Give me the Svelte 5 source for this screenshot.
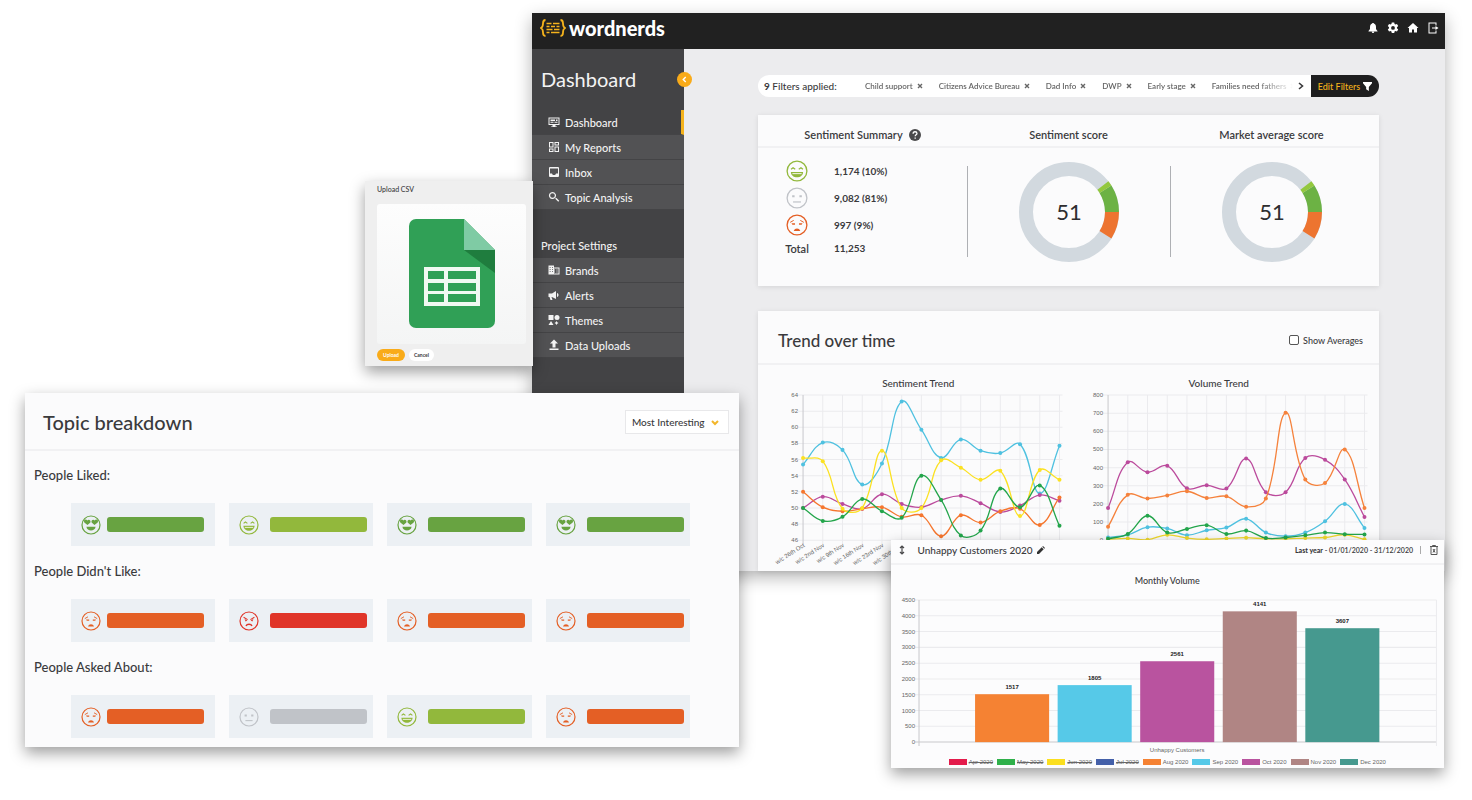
<script>
	const filters = ['Child support', 'Citizens Advice Bureau', 'Dad Info', 'DWP', 'Early stage', 'Families need fathers'];

	const mainNav = [
		{ label: 'Dashboard', icon: 'monitor', active: true },
		{ label: 'My Reports', icon: 'grid' },
		{ label: 'Inbox', icon: 'inbox' },
		{ label: 'Topic Analysis', icon: 'search' }
	];

	const projectNav = [
		{ label: 'Brands', icon: 'building' },
		{ label: 'Alerts', icon: 'horn' },
		{ label: 'Themes', icon: 'shapes' },
		{ label: 'Data Uploads', icon: 'upload' }
	];

	const summary = [
		{ mood: 'happy', value: '1,174 (10%)' },
		{ mood: 'neutral', value: '9,082 (81%)' },
		{ mood: 'sad', value: '997 (9%)' }
	];

	const scores = [
		{ title: 'Sentiment score', value: 51 },
		{ title: 'Market average score', value: 51 }
	];

	const colours = {
		love: '#68a341',
		happy: '#92b83c',
		neutral: '#c0c3c8',
		sad: '#e45f25',
		angry: '#e03529'
	};

	const topics = [
		{ title: 'People Liked:', moods: ['love', 'happy', 'love', 'love'] },
		{ title: "People Didn't Like:", moods: ['sad', 'angry', 'sad', 'sad'] },
		{ title: 'People Asked About:', moods: ['sad', 'neutral', 'happy', 'sad'] }
	];

	const trends = [
		{
			title: 'Sentiment Trend',
			left: 35,
			min: 46,
			max: 64,
			step: 2,
			weeks: ['26th Oct', '2nd Nov', '9th Nov', '16th Nov', '23rd Nov', '30th Nov'],
			series: [
				{ colour: '#4fc1e0', data: [55.4, 58.1, 57.2, 52.9, 55.5, 63.2, 59.7, 56.2, 58.5, 57.1, 56.8, 57.9, 51.8, 57.7] },
				{ colour: '#bb4a9c', data: [50, 51.4, 50.5, 49.9, 51.7, 50.5, 50.1, 51, 51.5, 50.6, 49.5, 50.3, 51.6, 50.9] },
				{ colour: '#f5762e', data: [52, 50.1, 49.6, 49.9, 50.1, 48.9, 49.1, 46.5, 49.1, 48.2, 49.6, 49.9, 47.9, 51.3] },
				{ colour: '#fbe122', data: [56.2, 55.8, 49.9, 50, 57.1, 50, 50, 55.9, 55, 53.5, 54.6, 49, 54.7, 53.5] },
				{ colour: '#23a54b', data: [50, 48.4, 48.9, 51.1, 49.6, 48.8, 54, 51, 46.6, 47.2, 52.4, 50.1, 52.8, 47.8] }
			]
		},
		{
			title: 'Volume Trend',
			left: 39,
			min: 0,
			max: 800,
			step: 100,
			weeks: [],
			series: [
				{ colour: '#bb4a9c', data: [178, 430, 375, 410, 286, 303, 285, 450, 265, 265, 453, 443, 335, 128] },
				{ colour: '#f5823c', data: [75, 250, 230, 247, 270, 233, 242, 184, 230, 702, 335, 315, 500, 178] },
				{ colour: '#4fc1e0', data: [15, 30, 72, 65, 28, 55, 70, 118, 42, 22, 42, 105, 200, 68] },
				{ colour: '#f0d82c', data: [5, 10, 3, 30, 12, 5, 10, 14, 8, 8, 12, 15, 30, 5] },
				{ colour: '#23a54b', data: [8, 35, 135, 42, 62, 83, 35, 53, 12, 15, 27, 42, 33, 32] }
			]
		}
	];

	const months = [
		{ label: 'Apr 2020', colour: '#e31b4b', hidden: true },
		{ label: 'May 2020', colour: '#2fb04a', hidden: true },
		{ label: 'Jun 2020', colour: '#fbdf1f', hidden: true },
		{ label: 'Jul 2020', colour: '#4460a9', hidden: true },
		{ label: 'Aug 2020', colour: '#f58233', value: 1517 },
		{ label: 'Sep 2020', colour: '#56c9e8', value: 1805 },
		{ label: 'Oct 2020', colour: '#b9539f', value: 2561 },
		{ label: 'Nov 2020', colour: '#b08584', value: 4141 },
		{ label: 'Dec 2020', colour: '#46998f', value: 3607 }
	];

	const bars = months.filter((m) => !m.hidden);

	const plotTop = 6;
	const plotHeight = 145;
	const plotWidth = 256;
	const weekCount = 14;

	function range(min, max, step) {
		const out = [];
		for (let v = min; v <= max; v += step) out.push(v);
		return out;
	}

	function points(chart, data) {
		return data.map((v, i) => ({
			x: chart.left + (i * plotWidth) / (weekCount - 1),
			y: yPos(chart, v)
		}));
	}

	function yPos(chart, v) {
		return plotTop + ((chart.max - v) / (chart.max - chart.min)) * plotHeight;
	}

	// smooth line through the points, tension 0.4
	function curve(pts) {
		const t = 0.4;
		const ctrl = pts.map((p, i) => {
			const a = pts[i - 1] || p;
			const b = pts[i + 1] || p;
			const d1 = Math.hypot(p.x - a.x, p.y - a.y);
			const d2 = Math.hypot(b.x - p.x, b.y - p.y);
			const f1 = (t * d1) / (d1 + d2);
			const f2 = (t * d2) / (d1 + d2);
			return {
				inX: p.x - f1 * (b.x - a.x),
				inY: p.y - f1 * (b.y - a.y),
				outX: p.x + f2 * (b.x - a.x),
				outY: p.y + f2 * (b.y - a.y)
			};
		});
		let d = `M${pts[0].x} ${pts[0].y}`;
		for (let i = 1; i < pts.length; i++) {
			const c0 = ctrl[i - 1];
			const c1 = ctrl[i];
			d += `C${c0.outX} ${c0.outY} ${c1.inX} ${c1.inY} ${pts[i].x} ${pts[i].y}`;
		}
		return d;
	}

	const barY = (v) => 148 - (v / 4500) * 142;
</script>

{#snippet face(mood)}
	<svg class="face" viewBox="0 0 20 20" fill="none" stroke={colours[mood]} aria-hidden="true">
		<circle cx="10" cy="10" r="9" stroke-width="1.2" />
		{#if mood === 'love'}
			<path d="M6.500 10 3.300 7.400C1.900 5 5 3.600 6.300 5.400 7.600 3.800 10.200 5 9.400 7.400zM13.500 10l-2.900-2.600C9.800 5 12.400 3.800 13.700 5.400 15 3.600 18.100 5 16.700 7.400z" fill={colours[mood]} stroke="none" />
			<path d="M5.400 11.800h9.200c-.6 5-8.600 5-9.200 0z" fill={colours[mood]} stroke="none" />
		{:else if mood === 'happy'}
			<path d="M4.600 8.400 6.400 7l2 1.400M11.600 8.400l2-1.400 1.800 1.400" stroke-width="1.1" />
			<path d="M4.400 10.800h11.200c-.4 6.600-10.800 6.600-11.200 0z" fill={colours[mood]} stroke="none" />
			<path d="M5.800 12.400h8.400" stroke="#fff" stroke-width=".8" />
		{:else if mood === 'neutral'}
			<path d="M5.600 8.400h2.200M12.200 8.400h2.200" stroke-width="2" />
			<path d="M6.400 13.600h7.200" stroke-width="1.100" />
		{:else if mood === 'sad'}
			<path d="M3.800 7.600 7 5.800M16.200 7.600 13 5.800" stroke-width=".9" />
			<path d="M5 8.400h3.200v1.400H5.800zM11.800 8.400H15l-.8 1.400h-2.400z" fill={colours[mood]} stroke="none" />
			<path d="M7 15.400c1-3 5-3 6 0z" fill={colours[mood]} stroke="none" />
		{:else}
			<path d="m4.600 6.200 4 2.400M15.400 6.200l-4 2.400" stroke-width="1.100" />
			<path d="M5.600 8l2.800 1.600-1.800.8zM14.400 8l-2.800 1.600 1.800.8z" fill={colours[mood]} stroke="none" />
			<path d="M7 15c1-2.400 5-2.400 6 0" stroke-width="1.400" />
		{/if}
	</svg>
{/snippet}

{#snippet icon(name)}
	<svg class="icon" viewBox="0 0 24 24" fill="currentColor" aria-hidden="true">
		{#if name === 'monitor'}
			<path fill-rule="evenodd" d="M1 3h22v15h-8v3h3v1H6v-1h3v-3H1zm2 2v11h18V5z" />
			<path d="M5 7h9v3H5zM16 7h3v3h-3zM5 11.500h6v2H5zM13 11.500h6v2h-6z" />
		{:else if name === 'grid'}
			<path fill-rule="evenodd" d="M2 2h9v11H2zm2 2v7h5V4zM13 2h9v7h-9zm2 2v3h5V4zM2 15h9v7H2zm2 2v3h5v-3zM13 11h9v11h-9zm2 2v7h5v-7z" />
		{:else if name === 'inbox'}
			<path fill-rule="evenodd" d="M4 2h16a2 2 0 0 1 2 2v16a2 2 0 0 1-2 2H4a2 2 0 0 1-2-2V4a2 2 0 0 1 2-2zm0 3v10h4c1 4 7 4 8 0h4V5z" />
		{:else if name === 'search'}
			<path fill-rule="evenodd" d="M9 2a7 7 0 0 1 5.600 11.200l.9.800H17l5.500 5.500-2 2L15 16v-1.500l-.8-.9A7 7 0 1 1 9 2zm0 2.300a4.700 4.700 0 1 0 0 9.400 4.700 4.700 0 0 0 0-9.400z" />
		{:else if name === 'building'}
			<path fill-rule="evenodd" d="M1 3h11v4h11v14H1zm2.500 3v2H5V6zm0 4v2H5v-2zm0 4v2H5v-2zM8 6v2h1.500V6zm0 4v2h1.500v-2zm0 4v2h1.500v-2zM12 9v2h2v2h-2v2h2v2h-2v2h9V9zm5 2h2v2h-2zm0 4h2v2h-2z" />
		{:else if name === 'horn'}
			<path d="M1 9h7l8-5v16l-8-4H7l2 6H5l-2-6H1zM18 8c4 1 4 7 0 8z" />
		{:else if name === 'shapes'}
			<path d="M1 2h10v10H1zM6 14l5 8H1zM17 14l1.500 2.500L21 18l-2.500 1.500L17 22l-1.500-2.500L13 18l2.500-1.500z" />
			<circle cx="18" cy="7" r="5" />
		{:else if name === 'upload'}
			<path d="M12 1l8 8h-5v8H9V9H4zM3 19h18v3H3z" />
		{:else if name === 'bell'}
			<path d="M12 22a2.500 2.500 0 0 0 2.500-2.500h-5A2.500 2.500 0 0 0 12 22zM20 17l-2-3V10c0-3.500-1.500-6-4.500-6.800V2h-3v1.200C7.500 4 6 6.500 6 10v4l-3 4v1h18v-1z" />
		{:else if name === 'gear'}
			<path fill-rule="evenodd" d="M9.500 1h5l.6 3.200 1.800 1 3-1.200 2.500 4.200-2.500 2.200v2.200l2.500 2.200-2.500 4.200-3-1.200-1.800 1-.6 3.200h-5l-.6-3.200-1.800-1-3 1.200-2.500-4.200 2.500-2.200v-2.200L1.600 8.200 4.100 4l3 1.200 1.800-1zM12 8a3.800 3.800 0 1 0 0 7.600A3.800 3.800 0 0 0 12 8z" />
		{:else if name === 'home'}
			<path d="M12 2l11 10h-3v9h-6v-6h-4v6H4v-9H1z" />
		{:else if name === 'exit'}
			<path d="M3 1h16v6h-2V3H5v18h12v-4h2v6H3zM17 8l6 4-6 4v-3h-7v-2h7z" />
		{/if}
	</svg>
{/snippet}

{#snippet nav(items)}
	<ul>
		{#each items as item}
			<li>
				<a href="#{item.icon}" class:active={item.active}>
					{@render icon(item.icon)}
					{item.label}
				</a>
			</li>
		{/each}
	</ul>
{/snippet}

<main class="stage">
	<div class="window dashboard">
		<header class="topbar">
			<a class="brand" href="#home">
				<svg viewBox="0 0 26 18" fill="none" stroke="#f5b31c" aria-hidden="true">
					<path d="M5.500 1C3 1 3 2.500 3 4.500S3 8 1 9c2 1 2 2.500 2 4.500S3 17 5.500 17M20.500 1C23 1 23 2.500 23 4.500S23 8 25 9c-2 1-2 2.500-2 4.500S23 17 20.500 17" stroke-width="1.800" />
					<path d="M6.500 4.500h5M13 4.500h6.500M6.500 7.500h3M11 7.500h4M16.500 7.500h3M6.500 10.500h6M14 10.500h5.500M6.500 13.500h3M11 13.500h8.500" stroke-width="1.300" />
				</svg>
				wordnerds
			</a>
			<div class="tools">
				<button aria-label="Notifications">{@render icon('bell')}</button>
				<button aria-label="Settings">{@render icon('gear')}</button>
				<button aria-label="Home">{@render icon('home')}</button>
				<button aria-label="Log out">{@render icon('exit')}</button>
			</div>
		</header>

		<div class="columns">
			<aside class="sidebar">
				<button class="collapse" aria-label="Collapse menu">
					<svg viewBox="0 0 16 16" fill="none" stroke="#fff" stroke-width="1.800"><path d="m9.500 5-3 3 3 3" /></svg>
				</button>
				<h1>Dashboard</h1>
				{@render nav(mainNav)}
				<h2>Project Settings</h2>
				{@render nav(projectNav)}
			</aside>

			<div class="content">
				<div class="filters">
					<p class="count"><b>9</b> Filters applied:</p>
					<div class="tags">
						{#each filters as filter}
							<span class="tag">
								{filter}
								<button aria-label="Remove {filter}">
									<svg viewBox="0 0 6 6" stroke="currentColor" stroke-width="1.400"><path d="m1 1 4 4M5 1 1 5" /></svg>
								</button>
							</span>
						{/each}
					</div>
					<button class="more" aria-label="More filters">
						<svg viewBox="0 0 6 8" fill="none" stroke="currentColor" stroke-width="1.600"><path d="m1 1 3.500 3L1 7" /></svg>
					</button>
					<button class="edit">
						Edit Filters
						<svg viewBox="0 0 10 10" fill="#fff"><path d="M0 0h10v1.500L6.500 5.500V10l-3-2V5.500L0 1.500z" /></svg>
					</button>
				</div>

				<section class="card">
					<div class="summary-head thirds">
						<h3>
							Sentiment Summary
							<svg viewBox="0 0 14 14" aria-hidden="true">
								<circle cx="7" cy="7" r="7" fill="#4a4a4c" />
								<path d="M4.800 5.400c0-3 4.500-2.800 4.500-.2C9.300 6.900 7.200 6.800 7.200 8.600M7.200 9.800v1.500" fill="none" stroke="#fff" stroke-width="1.500" />
							</svg>
						</h3>
						{#each scores as score}
							<h3>{score.title}</h3>
						{/each}
					</div>
					<div class="summary-body thirds">
						<table>
							<tbody>
								{#each summary as row}
									<tr>
										<th aria-label={row.mood}>{@render face(row.mood)}</th>
										<td>{row.value}</td>
									</tr>
								{/each}
								<tr class="total">
									<th>Total</th>
									<td>11,253</td>
								</tr>
							</tbody>
						</table>
						{#each scores as score}
							<div class="score">
								<svg viewBox="0 0 100 100" fill="none" stroke-width="14">
									<circle cx="50" cy="50" r="43" stroke="#d2d9df" />
									<circle cx="50" cy="50" r="43" stroke="#ed7430" pathLength="360" stroke-dasharray="32 328" />
									<circle cx="50" cy="50" r="43" stroke="#6cb244" pathLength="360" stroke-dasharray="32 328" stroke-dashoffset="32" />
									<circle cx="50" cy="50" r="43" stroke="#93c83e" pathLength="360" stroke-dasharray="6 354" stroke-dashoffset="38" />
									<text x="50" y="58" text-anchor="middle">{score.value}</text>
								</svg>
							</div>
						{/each}
					</div>
				</section>

				<section class="card trend">
					<div class="trend-head">
						<h2>Trend over time</h2>
						<label><input type="checkbox" /> Show Averages</label>
					</div>
					<div class="charts">
						{#each trends as chart}
							<figure>
								<figcaption>{chart.title}</figcaption>
								<svg viewBox="0 0 300 182">
									{#each range(chart.min, chart.max, chart.step) as tick}
										<line class="grid" x1={chart.left - 5} x2={chart.left + plotWidth + 3} y1={yPos(chart, tick)} y2={yPos(chart, tick)} />
										<text class="tick" x={chart.left - 5} y={yPos(chart, tick) + 2} text-anchor="end">{tick}</text>
									{/each}
									{#each range(0, weekCount - 1, 1) as i}
										<line class={i ? 'grid' : 'axis'} x1={chart.left + (i * plotWidth) / 13} x2={chart.left + (i * plotWidth) / 13} y1={plotTop} y2={plotTop + plotHeight + 4} />
									{/each}
									{#each chart.weeks as week, i}
										<text class="tick" text-anchor="end" transform="translate({chart.left + 2 + (i * plotWidth) / 13} 157) rotate(-33)">w/c {week}</text>
									{/each}
									{#each chart.series as line}
										{@const pts = points(chart, line.data)}
										<path d={curve(pts)} fill="none" stroke={line.colour} stroke-width="1.300" />
										{#each pts as p}
											<circle cx={p.x} cy={p.y} r="2" fill={line.colour} />
										{/each}
									{/each}
								</svg>
							</figure>
						{/each}
					</div>
				</section>
			</div>
		</div>
	</div>

	<form class="window upload" on:submit|preventDefault>
		<h2>Upload CSV</h2>
		<div class="drop">
			<svg viewBox="0 0 86 109" aria-hidden="true">
				<path d="M7 0h48l31 31v71a7 7 0 0 1-7 7H7a7 7 0 0 1-7-7V7a7 7 0 0 1 7-7z" fill="#30a056" />
				<path d="M55 0l31 31H55z" fill="#7fcba4" />
				<path d="M55 31h31v23z" fill="#1f7d3e" />
				<path fill-rule="evenodd" d="M15 48h56v39H15zm4 4v8h16v-8zm20 0v8h28v-8zM19 64v8h16v-8zm20 0v8h28v-8zM19 75v8h16v-8zm20 0v8h28v-8z" fill="#f1f9f2" />
			</svg>
		</div>
		<div class="actions">
			<button class="primary">Upload</button>
			<button>Cancel</button>
		</div>
	</form>

	<section class="window topics">
		<header>
			<h2>Topic breakdown</h2>
			<div class="sort">
				<select aria-label="Sort topics">
					<option>Most Interesting</option>
				</select>
				<svg viewBox="0 0 8 6" fill="none" stroke="#f3b62b" stroke-width="2"><path d="m1 1 3 3 3-3" /></svg>
			</div>
		</header>
		{#each topics as group}
			<h3>{group.title}</h3>
			<div class="cells">
				{#each group.moods as mood}
					<div class="cell">
						{@render face(mood)}
						<span class="pill" style="background: {colours[mood]}"></span>
					</div>
				{/each}
			</div>
		{/each}
	</section>

	<section class="window report">
		<header>
			<svg class="move" viewBox="0 0 6 10" fill="none" stroke="#4a4a4c" stroke-width="1.200"><path d="M3 1v8M1 3l2-2 2 2M1 7l2 2 2-2" /></svg>
			<h2>Unhappy Customers 2020</h2>
			<button aria-label="Rename">
				<svg viewBox="0 0 8 8" fill="#333"><path d="M0 8V6l4.700-4.700 2 2L2 8zM5.300.7 6 0l2 2-.7.700z" /></svg>
			</button>
			<p class="dates"><b>Last year</b> - 01/01/2020 - 31/12/2020</p>
			<button class="bin" aria-label="Delete">
				<svg viewBox="0 0 8 10" fill="none" stroke="#555" stroke-width="1"><path d="M0 1.500h8M2.500 1.500v-1h3v1M1 2v7.500h6V2M3 4l2 3.500M5 4 3 7.500" /></svg>
			</button>
		</header>
		<h3>Monthly Volume</h3>
		<svg class="volume" viewBox="0 0 553 162">
			{#each range(0, 4500, 500) as tick}
				<line class={tick ? 'grid' : 'axis'} x1="24" x2="545" y1={barY(tick)} y2={barY(tick)} />
				<text class="tick" x="24" y={barY(tick) + 2} text-anchor="end">{tick}</text>
			{/each}
			<line class="axis" x1="28" x2="28" y1="6" y2="152" />
			<line class="grid" x1="545" x2="545" y1="6" y2="152" />
			{#each bars as bar, i}
				<rect x={84 + i * 82.500} y={barY(bar.value)} width="74" height={148 - barY(bar.value)} fill={bar.colour} />
				<text class="value" x={121 + i * 82.500} y={barY(bar.value) - 5} text-anchor="middle">{bar.value}</text>
			{/each}
			<text class="tick" x="286" y="158" text-anchor="middle">Unhappy Customers</text>
		</svg>
		<ul class="legend">
			{#each months as month}
				<li class:off={month.hidden}>
					<span class="swatch" style="background: {month.colour}"></span>
					<span class="name">{month.label}</span>
				</li>
			{/each}
		</ul>
	</section>
</main>

<style>
	:global(body) {
		margin: 0;
		background: #fff;
	}

	.stage {
		position: relative;
		min-height: 100vh;
		min-width: 1200px;
		overflow: hidden;
		font-family: Lato, "Open Sans", sans-serif;
		color: #3a3a3c;
	}

	h1, h2, h3, p, ul, figure {
		margin: 0;
		padding: 0;
		font-weight: 500;
	}

	ul {
		list-style: none;
	}

	svg {
		display: block;
	}

	button {
		display: flex;
		align-items: center;
		justify-content: center;
		margin: 0;
		padding: 0;
		border: 0;
		background: none;
		font: inherit;
		color: inherit;
		cursor: pointer;
	}

	.window {
		position: absolute;
		box-shadow: 0 6px 14px rgba(0, 0, 0, 0.38);
	}

	.icon {
		width: 12px;
		height: 12px;
	}

	.face {
		width: 20px;
		height: 20px;
		flex: none;
	}

	/* dashboard */
	.dashboard {
		top: 13px;
		left: 532px;
		right: 27px;
		background: #ececee;
		box-shadow: 0 6px 16px rgba(0, 0, 0, 0.3);
	}

	.topbar {
		display: flex;
		align-items: center;
		justify-content: space-between;
		height: 36px;
		box-sizing: border-box;
		padding: 0 6px 6px 8px;
		background: #212121;
		color: #fff;
	}

	.brand {
		display: flex;
		align-items: center;
		gap: 3px;
		color: #fff;
		font-size: 20px;
		font-weight: 900;
		line-height: 24px;
		text-decoration: none;
	}

	.brand svg {
		width: 26px;
		height: 18px;
	}

	.tools {
		display: flex;
		gap: 8px;
	}

	.columns {
		display: flex;
	}

	.sidebar {
		position: relative;
		flex: none;
		width: 152px;
		background: #434345;
		color: #f3f3f3;
	}

	.collapse {
		position: absolute;
		top: 23px;
		right: -8px;
		width: 15px;
		height: 15px;
		border-radius: 50%;
		background: #f9ab19;
	}

	.collapse svg {
		width: 13px;
	}

	.sidebar h1 {
		padding: 18px 9px 0;
		font-size: 20px;
		font-weight: 400;
		line-height: 24px;
		margin-bottom: 19px;
	}

	.sidebar h2 {
		padding: 26px 9px 2px;
		font-size: 11px;
		line-height: 20px;
	}

	.sidebar a {
		display: flex;
		align-items: center;
		gap: 5px;
		box-sizing: border-box;
		height: 25px;
		padding-left: 16px;
		border-bottom: 1px solid #444446;
		background: #525254;
		color: inherit;
		font-size: 11px;
		font-weight: 500;
		text-decoration: none;
	}

	.sidebar a.active {
		border-right: 3px solid #f5b31c;
		background: none;
	}

	.content {
		flex: 1;
		min-width: 0;
		padding: 26px 66px 0 74px;
	}

	.filters {
		display: flex;
		align-items: center;
		height: 22px;
		padding-left: 6px;
		border-radius: 11px;
		background: #fff;
	}

	.count {
		flex: none;
		width: 101px;
		font-size: 10px;
	}

	.tags {
		display: flex;
		flex: 1;
		min-width: 0;
		gap: 16px;
		overflow: hidden;
		font-size: 8px;
		font-weight: 600;
		white-space: nowrap;
		-webkit-mask-image: linear-gradient(90deg, #000 92%, transparent);
		mask-image: linear-gradient(90deg, #000 92%, transparent);
	}

	.tag {
		display: flex;
		align-items: center;
		gap: 4px;
		color: #666;
	}

	.tag svg {
		width: 6px;
	}

	.more {
		width: 16px;
		margin-right: 2px;
	}

	.more svg {
		width: 6px;
	}

	.edit {
		gap: 3px;
		width: 68px;
		height: 22px;
		border-radius: 0 11px 11px 0;
		background: #1e1e1f;
		color: #f5b31c;
		font-size: 9px;
		font-weight: 500;
	}

	.edit svg {
		width: 9px;
	}

	.card {
		margin-top: 18px;
		background: #fbfbfc;
		box-shadow: 0 1px 5px rgba(0, 0, 0, 0.1);
	}

	.thirds {
		display: grid;
		grid-template-columns: 209fr 203fr 203fr;
		padding-right: 6px;
	}

	.summary-head {
		align-items: center;
		height: 33px;
		padding-top: 8px;
		border-bottom: 2px solid #f1f1f3;
		box-sizing: border-box;
	}

	.summary-head h3 {
		display: flex;
		justify-content: center;
		align-items: center;
		gap: 6px;
		font-size: 11px;
		font-weight: 600;
		line-height: 16px;
	}

	.summary-head svg {
		width: 12px;
	}

	.summary-body {
		padding-top: 9px;
		height: 129px;
	}

	table {
		align-self: start;
		border-collapse: collapse;
		margin-left: 20px;
		font-size: 11px;
	}

	th, td {
		height: 27px;
		padding: 0;
		font-weight: 600;
	}

	th {
		width: 38px;
	}

	th .face {
		width: 22px;
		height: 22px;
		margin: 0 auto;
	}

	td {
		padding-left: 18px;
		font-size: 10px;
		font-weight: 700;
		text-align: left;
	}

	.total th, .total td {
		height: 20px;
	}

	.score {
		display: flex;
		align-items: center;
		justify-content: center;
		height: 91px;
		margin-top: 9px;
		border-left: 1px solid #aeb0b4;
	}

	.score svg {
		width: 100px;
		height: 100px;
		flex: none;
	}

	.score text {
		fill: #2d2d2f;
		font-size: 22px;
	}

	.trend {
		margin-top: 25px;
	}

	.trend-head {
		display: flex;
		align-items: center;
		justify-content: space-between;
		height: 54px;
		padding: 6px 16px 0 20px;
		border-bottom: 2px solid #f1f1f3;
		box-sizing: border-box;
	}

	.trend-head h2 {
		padding-top: 2px;
		font-size: 17px;
		font-weight: 500;
		line-height: 20px;
	}

	.trend-head label {
		display: flex;
		align-items: center;
		gap: 4px;
		font-size: 9px;
		font-weight: 500;
	}

	.trend-head input {
		appearance: none;
		width: 10px;
		height: 10px;
		margin: 0;
		border: 1px solid #555;
		border-radius: 2px;
		background: #fff;
	}

	.charts {
		display: grid;
		grid-template-columns: 1fr 1fr;
		padding: 12px 10px 0;
	}

	figcaption {
		font-size: 10px;
		font-weight: 500;
		line-height: 12px;
		text-align: center;
	}

	.grid {
		stroke: #ebebee;
		stroke-width: 1;
	}

	.axis {
		stroke: #c8c8cc;
		stroke-width: 1;
	}

	.tick {
		fill: #666;
		font-family: "Liberation Sans", Arial, sans-serif;
		font-size: 6px;
	}

	/* upload dialog */
	.upload {
		top: 181px;
		left: 365px;
		width: 168px;
		box-sizing: border-box;
		padding: 4px 7px 5px 12px;
		background: #efefef;
	}

	.upload h2 {
		font-size: 7px;
		line-height: 9px;
	}

	.drop {
		display: flex;
		justify-content: center;
		margin: 10px 0 5px;
		padding: 15px 0 16px;
		border-radius: 3px;
		background: linear-gradient(#fdfdfd, #f4f5f5);
	}

	.drop svg {
		width: 86px;
		height: 109px;
	}

	.actions {
		display: flex;
		gap: 4px;
	}

	.actions button {
		height: 12px;
		padding: 0 5px;
		border-radius: 6px;
		background: #fff;
		font-size: 5px;
		font-weight: 700;
	}

	.actions .primary {
		padding: 0 6px;
		background: #f9ab19;
		color: #fff;
	}

	/* topic breakdown */
	.topics {
		top: 393px;
		left: 25px;
		width: 48.5%;
		padding-bottom: 9px;
		background: #fbfbfc;
	}

	.topics header {
		display: flex;
		align-items: center;
		justify-content: space-between;
		height: 58px;
		padding: 2px 10px 0 18px;
		border-bottom: 2px solid #f1f1f3;
		box-sizing: border-box;
		margin-bottom: 14px;
	}

	.topics h2 {
		font-size: 20px;
		font-weight: 500;
		line-height: 24px;
	}

	.sort {
		position: relative;
	}

	.sort select {
		appearance: none;
		height: 24px;
		padding: 0 23px 0 6px;
		border: 1px solid #e8e8ea;
		border-radius: 0;
		background: #fff;
		color: #3a3a3c;
		font: 500 10px Lato, sans-serif;
	}

	.sort svg {
		position: absolute;
		top: 10px;
		right: 10px;
		width: 8px;
		pointer-events: none;
	}

	.topics h3 {
		padding-left: 9px;
		font-size: 13px;
		font-weight: 500;
		line-height: 20px;
	}

	.cells {
		display: grid;
		grid-template-columns: repeat(4, 1fr);
		gap: 14px;
		margin: 18px 49px 15px 46px;
	}

	.cells:last-child {
		margin-bottom: 0;
	}

	.cell {
		display: flex;
		align-items: center;
		gap: 11px;
		height: 43px;
		padding: 0 6px 0 10px;
		background: #ecf0f4;
	}

	.cell:first-child {
		gap: 6px;
	}

	.pill {
		width: 97px;
		height: 15px;
		border-radius: 3px;
	}

	/* report */
	.report {
		top: 540px;
		right: 28px;
		width: 37.6%;
		background: #fcfcfd;
	}

	.report header {
		display: flex;
		align-items: center;
		height: 25px;
		box-sizing: border-box;
		padding: 0 6px 4px 8px;
		border-bottom: 2px solid #f2f2f4;
	}

	.move {
		width: 6px;
	}

	.report h2 {
		margin: 0 4px 0 13px;
		font-size: 10px;
		font-weight: 500;
	}

	.report header button svg {
		width: 8px;
	}

	.dates {
		margin-left: auto;
		padding-right: 7px;
		border-right: 1px solid #aaa;
		font-size: 7px;
		font-weight: 600;
		line-height: 8px;
	}

	.report .bin {
		margin-left: 9px;
	}

	.report h3 {
		padding: 10px 0 7px;
		font-size: 9px;
		line-height: 12px;
		text-align: center;
	}

	.volume .value {
		fill: #222;
		font: bold 6px "Liberation Sans", Arial, sans-serif;
	}

	.legend {
		display: flex;
		justify-content: center;
		gap: 4px;
		height: 12px;
		font: 6px/8px "Liberation Sans", Arial, sans-serif;
		color: #666;
	}

	.legend li {
		display: flex;
		align-items: center;
		gap: 2px;
	}

	.swatch {
		width: 18px;
		height: 6px;
	}

	.off .name {
		text-decoration: line-through;
	}
</style>
